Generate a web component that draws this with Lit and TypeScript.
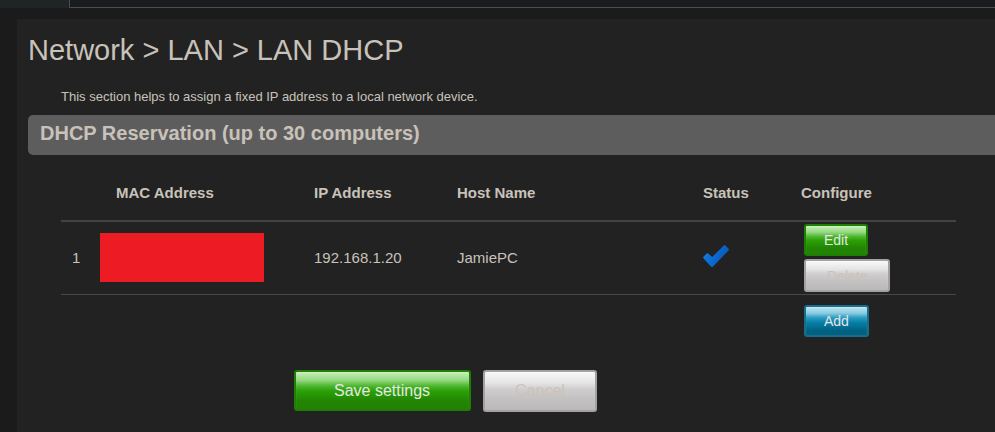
import { LitElement, html, css } from "lit";
import { customElement, property, state } from "lit/decorators.js";

interface Reservation {
  ip: string;
  host: string;
  enabled: boolean;
}

@customElement("gloss-button")
export class GlossButton extends LitElement {
  @property() tone = "green";
  @property() size = "small";
  @property({ type: Boolean }) disabled = false;

  static styles = css`
    :host {
      display: block;
    }
    button {
      display: block;
      margin: 0;
      padding: 0 18px;
      height: 32px;
      border: 2px solid;
      border-radius: 3px;
      font: 14px/28px "Liberation Sans", Arial, sans-serif;
      color: #e6e6e6;
      white-space: nowrap;
      cursor: pointer;
    }
    .large {
      height: 41px;
      padding: 0 39px 0 38px;
      font-size: 16px;
      line-height: 36px;
    }
    .green {
      border-color: #1f7f05;
      background: linear-gradient(#c8efb9 0%, #96d983 22%, #4cb62e 38%, #2ba006 52%, #228403 80%, #228203 100%);
      box-shadow: inset 0 1px 1px #d5f3ca80;
    }
    .blue {
      border-color: #1b6b8a;
      background: linear-gradient(#bce5f2 0%, #8accdf 22%, #2c9cc2 38%, #0780a9 55%, #00607f 85%, #006080 100%);
      box-shadow: inset 0 1px 1px #cceef880;
    }
    .grey {
      height: 33px;
      padding: 0 21px;
      border-color: #a3a1a2;
      background: linear-gradient(#f8f8f8 0%, #e6e5e6 28%, #cfcdce 45%, #c4c1c2 70%, #bab8b9 100%);
      box-shadow: inset 0 1px 1px #ffffff80;
      color: #cbc3ba;
      cursor: default;
    }
    .grey.large {
      height: 42px;
      padding: 0 30px;
    }
  `;

  render() {
    return html`<button type="button" class="${this.tone} ${this.size}" ?disabled=${this.disabled}>
      <slot></slot>
    </button>`;
  }
}

@customElement("app-root")
export class AppRoot extends LitElement {
  @state() private rows: Reservation[] = [{ ip: "192.168.1.20", host: "JamiePC", enabled: true }];

  static styles = css`
    :host {
      display: flex;
      flex-direction: column;
      min-height: 100vh;
      background: #1b1b1b;
      color: #c9c2ba;
      font-family: "Liberation Sans", Arial, sans-serif;
      overflow-x: hidden;
    }
    .tabs {
      display: flex;
      height: 8px;
      margin-bottom: 11px;
    }
    .tab {
      width: 69px;
      background: #1f2525;
    }
    .rest {
      flex: 1;
      border-left: 1px solid #4a4c4e;
      border-bottom: 1px solid #4a4c4e;
      background: #1a1b1e;
    }
    main {
      flex: 1;
      margin-left: 17px;
      padding: 14px 0 20px 11px;
      background: #222;
    }
    h1 {
      margin: 0;
      font-size: 29px;
      line-height: 34px;
      font-weight: 400;
    }
    p {
      margin: 21px 33px 10px;
      font-size: 13px;
      line-height: 17px;
    }
    h2 {
      margin: 0;
      padding: 0 12px 4px;
      border-radius: 5px 0 0 5px;
      background: #5d5d5d;
      font-size: 20px;
      line-height: 36px;
      font-weight: 700;
    }
    .data {
      margin: 10px 39px 0 33px;
    }
    table {
      width: 100%;
      border-collapse: separate;
      border-spacing: 0;
      table-layout: fixed;
      font-size: 15px;
      line-height: 18px;
    }
    th,
    td {
      padding: 0;
      text-align: left;
      vertical-align: middle;
    }
    th {
      height: 55px;
      border-bottom: 2px solid #3f4447;
      font-weight: 700;
    }
    tbody td {
      height: 72px;
      border-bottom: 1px solid #44484a;
    }
    .num {
      width: 39px;
    }
    td.num {
      text-indent: 11px;
    }
    .mac {
      width: 214px;
    }
    th.mac {
      text-indent: 16px;
    }
    .ip {
      width: 143px;
    }
    .status {
      width: 98px;
    }
    .conf {
      width: 155px;
    }
    .redacted {
      width: 164px;
      height: 49px;
      margin-bottom: 2px;
      background: #ed1c24;
    }
    .check {
      display: block;
      width: 26px;
      height: 24px;
      margin-bottom: 5px;
    }
    .actions {
      display: grid;
      gap: 3px;
      justify-content: start;
      padding-left: 3px;
    }
    .add {
      padding: 10px 0 0 3px;
    }
    .buttons {
      display: flex;
      align-items: flex-start;
      gap: 12px;
      padding: 33px 0 0 266px;
    }
  `;

  render() {
    return html`
      <div class="tabs"><div class="tab"></div><div class="rest"></div></div>
      <main>
        <h1>Network &gt; LAN &gt; LAN DHCP</h1>
        <p>This section helps to assign a fixed IP address to a local network device.</p>
        <h2>DHCP Reservation (up to 30 computers)</h2>
        <div class="data">
          <table>
            <thead>
              <tr>
                <th class="num"></th>
                <th class="mac">MAC Address</th>
                <th class="ip">IP Address</th>
                <th>Host Name</th>
                <th class="status">Status</th>
                <th class="conf">Configure</th>
              </tr>
            </thead>
            <tbody>
              ${this.rows.map(
                (row, i) => html`<tr>
                  <td class="num">${i + 1}</td>
                  <td><div class="redacted"></div></td>
                  <td>${row.ip}</td>
                  <td>${row.host}</td>
                  <td>${row.enabled ? this.check() : ""}</td>
                  <td>
                    <div class="actions">
                      <gloss-button>Edit</gloss-button>
                      <gloss-button tone="grey" disabled>Delete</gloss-button>
                    </div>
                  </td>
                </tr>`
              )}
            </tbody>
            <tfoot>
              <tr>
                <td colspan="5"></td>
                <td class="add"><gloss-button tone="blue">Add</gloss-button></td>
              </tr>
            </tfoot>
          </table>
        </div>
        <div class="buttons">
          <gloss-button size="large">Save settings</gloss-button>
          <gloss-button size="large" tone="grey" disabled>Cancel</gloss-button>
        </div>
      </main>
    `;
  }

  private check() {
    return html`<svg class="check" viewBox="0 0 26 24" role="img" aria-label="Enabled">
      <defs>
        <linearGradient id="tick" x1="0" y1="0" x2="1" y2="0.4">
          <stop offset="0" stop-color="#1180ee" />
          <stop offset="1" stop-color="#0758b8" />
        </linearGradient>
      </defs>
      <path
        d="M0.6 12.6 L3.6 9.6 Q4.4 8.9 5.2 9.6 L9.3 13 L20.8 1.6 Q21.6 0.9 22.4 1.6 L25.6 4.8 Q26.3 5.6 25.6 6.4 L10.1 22.4 Q9 23.5 7.9 22.4 L0.6 14.4 Q-0.2 13.4 0.6 12.6 Z"
        fill="url(#tick)"
      />
    </svg>`;
  }
}
